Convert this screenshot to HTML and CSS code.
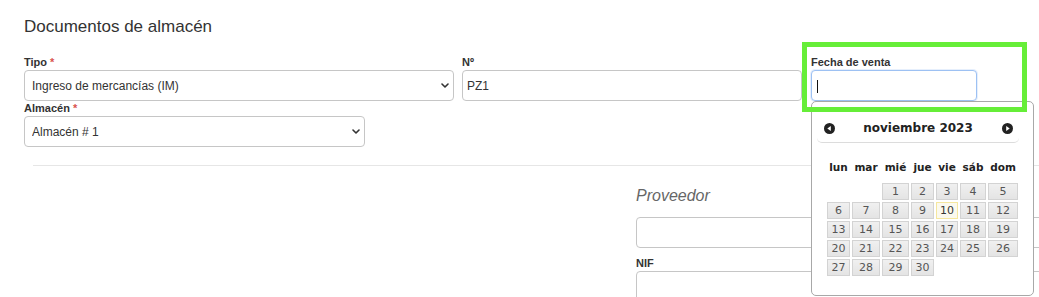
FILE: index.html
```html
<!DOCTYPE html>
<html lang="es">
<head>
<meta charset="utf-8">
<title>Documentos de almacén</title>
<link rel="stylesheet" href="styles.css">
</head>
<body>
<div class="page">
  <h1 class="title">Documentos de almacén</h1>
  <div class="top-grid">
    <div class="col">
      <label class="lbl">Tipo <span class="req">*</span></label>
      <div class="select-wrap w430">
        <select class="ctl sel"><option>Ingreso de mercancías (IM)</option></select>
        <svg class="chev" viewBox="0 0 8 5"><path d="M1 1 L4 4 L7 1" fill="none" stroke="#333" stroke-width="1.6" stroke-linecap="round" stroke-linejoin="round"/></svg>
      </div>
      <label class="lbl">Almacén <span class="req">*</span></label>
      <div class="select-wrap w341">
        <select class="ctl sel"><option>Almacén # 1</option></select>
        <svg class="chev" viewBox="0 0 8 5"><path d="M1 1 L4 4 L7 1" fill="none" stroke="#333" stroke-width="1.6" stroke-linecap="round" stroke-linejoin="round"/></svg>
      </div>
    </div>
    <div class="col">
      <label class="lbl">Nº</label>
      <input class="ctl inp w340" value="PZ1">
    </div>
    <div class="col">
      <label class="lbl">Fecha de venta</label>
      <div class="inp-wrap">
        <div class="ctl inp focus"></div>
        <span class="caret"></span>
      </div>
    </div>
  </div>
  <div class="divider"></div>
  <div class="lower">
    <div></div>
    <div class="prov">
      <h2 class="subtitle">Proveedor</h2>
      <input class="ctl inp full">
      <label class="lbl nif">NIF</label>
      <input class="ctl inp full">
    </div>
  </div>
</div>

<div class="datepicker">
  <div class="dp-head">
    <svg class="dp-prev" viewBox="0 0 11 11"><circle cx="5.5" cy="5.5" r="5.5" fill="#222"/><polygon points="3.3,5.5 6.8,3 6.8,8" fill="#fff"/></svg>
    <span class="dp-title">noviembre 2023</span>
    <svg class="dp-next" viewBox="0 0 11 11"><circle cx="5.5" cy="5.5" r="5.5" fill="#222"/><polygon points="7.7,5.5 4.2,3 4.2,8" fill="#fff"/></svg>
  </div>
  <table class="dp-table">
    <thead>
      <tr><th>lun</th><th>mar</th><th>mié</th><th>jue</th><th>vie</th><th>sáb</th><th>dom</th></tr>
    </thead>
    <tbody>
      <tr><td></td><td></td><td><a class="day">1</a></td><td><a class="day">2</a></td><td><a class="day">3</a></td><td><a class="day">4</a></td><td><a class="day">5</a></td></tr>
      <tr><td><a class="day">6</a></td><td><a class="day">7</a></td><td><a class="day">8</a></td><td><a class="day">9</a></td><td><a class="day today">10</a></td><td><a class="day">11</a></td><td><a class="day">12</a></td></tr>
      <tr><td><a class="day">13</a></td><td><a class="day">14</a></td><td><a class="day">15</a></td><td><a class="day">16</a></td><td><a class="day">17</a></td><td><a class="day">18</a></td><td><a class="day">19</a></td></tr>
      <tr><td><a class="day">20</a></td><td><a class="day">21</a></td><td><a class="day">22</a></td><td><a class="day">23</a></td><td><a class="day">24</a></td><td><a class="day">25</a></td><td><a class="day">26</a></td></tr>
      <tr><td><a class="day">27</a></td><td><a class="day">28</a></td><td><a class="day">29</a></td><td><a class="day">30</a></td><td></td><td></td><td></td></tr>
    </tbody>
  </table>
</div>

<div class="highlight"></div>
</body>
</html>
```

FILE: styles.css
```css
html, body {
  margin: 0;
  padding: 0;
  background: #fff;
  overflow: hidden;
}

body {
  font-family: "Liberation Sans", Arial, sans-serif;
  color: #333;
  width: 1039px;
  height: 297px;
  position: relative;
}

.page {
  padding: 16px 0 0 24px;
}

.title {
  margin: 0 0 17px;
  font-size: 17px;
  line-height: 22px;
  font-weight: normal;
  color: #333;
}

.top-grid {
  display: grid;
  grid-template-columns: 438px 349px 166px;
}

.lbl {
  display: block;
  font-size: 11px;
  line-height: 14px;
  font-weight: bold;
  color: #333;
  margin-bottom: 1px;
}

.req {
  color: #d9534f;
}

.ctl {
  box-sizing: border-box;
  height: 31px;
  border: 1px solid #c6c6c6;
  border-radius: 4px;
  background: #fff;
  font-family: "Liberation Sans", Arial, sans-serif;
  font-size: 12px;
  color: #333;
  margin: 0;
  outline: none;
}

.select-wrap {
  position: relative;
}

.w430 { width: 430px; }
.w341 { width: 341px; }
.w340 { width: 340px; }

.sel {
  appearance: none;
  -webkit-appearance: none;
  width: 100%;
  padding: 0 20px 0 7px;
}

.chev {
  position: absolute;
  right: 5px;
  top: 13px;
  width: 8px;
  height: 5px;
}

.inp {
  display: block;
  padding: 0 4px;
}

.inp-wrap {
  position: relative;
  width: 166px;
}

.focus {
  width: 166px;
  border-color: #9dc1f3;
  box-shadow: 0 0 0 1px rgba(157, 193, 243, 0.25);
}

.caret {
  position: absolute;
  left: 6px;
  top: 10px;
  width: 1px;
  height: 13px;
  background: #111;
}

.divider {
  height: 1px;
  background: #e6e6e6;
  margin: 18px 0 0 9px;
}

.lower {
  display: grid;
  grid-template-columns: 612px 440px;
}

.subtitle {
  margin: 20px 0 11px;
  font-size: 16px;
  line-height: 20px;
  font-style: italic;
  font-weight: normal;
  color: #666;
}

.full {
  width: 440px;
}

.nif {
  margin-top: 8px;
}

/* overlay highlight */
.highlight {
  position: absolute;
  left: 802px;
  top: 42px;
  width: 225px;
  height: 70px;
  box-sizing: border-box;
  border: 5px solid #66ee38;
  z-index: 3;
}

/* datepicker */
.datepicker {
  position: absolute;
  left: 811px;
  top: 101px;
  width: 223px;
  height: 195px;
  box-sizing: border-box;
  border: 1px solid #a8a8a8;
  border-radius: 5px;
  background: #fff;
  padding: 0 14px 0 5px;
  z-index: 2;
  font-family: "DejaVu Sans", Verdana, sans-serif;
}

.dp-head {
  position: relative;
  margin-top: 11px;
  height: 27px;
  padding-top: 2px;
  border-bottom: 1px solid #dcdcdc;
  border-radius: 0 0 5px 5px;
  text-align: center;
  font-size: 12px;
  line-height: 27px;
  font-weight: bold;
  color: #222;
}

.dp-prev, .dp-next {
  position: absolute;
  top: 10px;
  width: 11px;
  height: 11px;
}

.dp-prev { left: 7px; }
.dp-next { right: 6px; }

.dp-table {
  margin: 13px 0 0 auto;
  width: 193px;
  table-layout: fixed;
  border-collapse: collapse;
}

.dp-table th {
  padding: 5px 0 9px;
  font-size: 10.5px;
  line-height: 12px;
  font-weight: bold;
  color: #222;
  text-align: center;
}

.dp-table th:nth-child(1) { width: 25px; }
.dp-table th:nth-child(2) { width: 30px; }
.dp-table th:nth-child(3) { width: 29px; }
.dp-table th:nth-child(4) { width: 25px; }
.dp-table th:nth-child(5) { width: 24px; }
.dp-table th:nth-child(6) { width: 28px; }
.dp-table th:nth-child(7) { width: 32px; }

.dp-table td {
  padding: 1px;
}

.day {
  display: block;
  box-sizing: border-box;
  height: 17px;
  border: 1px solid #d3d3d3;
  background: linear-gradient(#f0f0f0, #e4e4e4);
  font-size: 11px;
  line-height: 15px;
  text-align: center;
  color: #555;
}

.day.today {
  border-color: #f5e79e;
  background: #fbf9ee;
  color: #363636;
}
```
